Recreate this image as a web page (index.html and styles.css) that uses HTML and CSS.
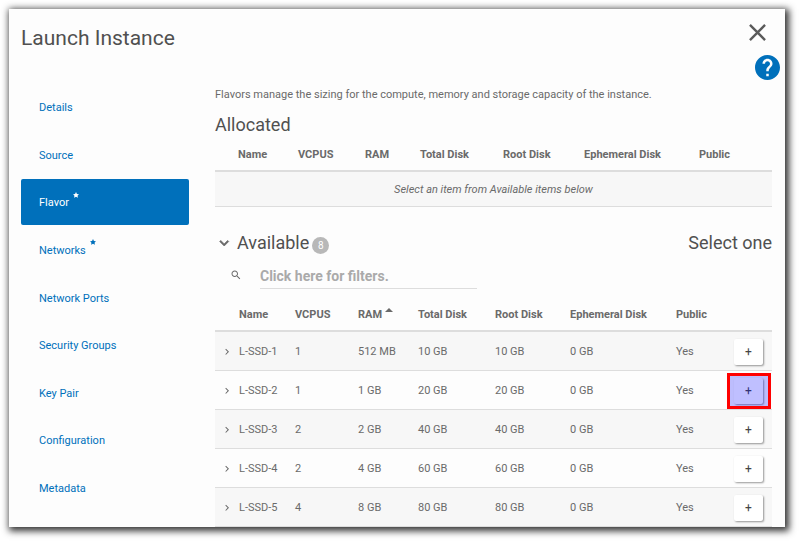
FILE: index.html
```
<!DOCTYPE html>
<html lang="en">
<head>
    <meta charset="UTF-8">
    <title>Launch Instance</title>
    <link rel="stylesheet" href="styles.css">
</head>
<body>
    <!-- shared icons -->
    <svg class="sprite" aria-hidden="true">
        <symbol id="star" viewBox="0 0 24 24">
            <path d="M12 0l3.700 7.600 8.100.9-5.700 6 1.700 8.500L12 19l-7.800 4 1.700-8.500-5.700-6 8.100-.9z"/>
        </symbol>
        <symbol id="chevron" viewBox="0 0 24 24">
            <path d="M8.600 16.300l4.600-4.600-4.600-4.600L10 5.700l6 6-6 6z"/>
        </symbol>
    </svg>

    <div class="modal">
        <header class="modal-header">
            <h1>Launch Instance</h1>
            <button type="button" class="close" aria-label="Close">
                <svg viewBox="0 0 18 18"><path d="M1 1l16 16M17 1L1 17"/></svg>
            </button>
        </header>
        <button type="button" class="help" aria-label="Help">
            <svg viewBox="2 2 20 20"><path d="M12 2C6.480 2 2 6.480 2 12s4.480 10 10 10 10-4.480 10-10S17.520 2 12 2zm1 17h-2v-2h2v2zm2.070-7.750l-.9.920C13.450 12.900 13 13.500 13 15h-2v-.5c0-1.100.45-2.100 1.170-2.830l1.240-1.260c.37-.36.59-.86.59-1.410 0-1.100-.9-2-2-2s-2 .9-2 2H8c0-2.210 1.790-4 4-4s4 1.790 4 4c0 .88-.36 1.680-.93 2.250z"/></svg>
        </button>

        <div class="modal-body">
            <nav class="steps">
                <a href="#">Details</a>
                <a href="#">Source</a>
                <a href="#" class="active">Flavor<svg class="star"><use href="#star"/></svg></a>
                <a href="#">Networks<svg class="star"><use href="#star"/></svg></a>
                <a href="#">Network Ports</a>
                <a href="#">Security Groups</a>
                <a href="#">Key Pair</a>
                <a href="#">Configuration</a>
                <a href="#">Metadata</a>
            </nav>

            <main class="content">
                <p>Flavors manage the sizing for the compute, memory and storage capacity of the instance.</p>

                <h2>Allocated</h2>
                <table class="allocated">
                    <thead>
                        <tr>
                            <th class="expand"></th>
                            <th class="name">Name</th>
                            <th class="vcpus">VCPUS</th>
                            <th class="ram">RAM</th>
                            <th class="total">Total Disk</th>
                            <th class="root">Root Disk</th>
                            <th class="ephemeral">Ephemeral Disk</th>
                            <th>Public</th>
                        </tr>
                    </thead>
                    <tbody>
                        <tr>
                            <td colspan="8" class="empty">Select an item from Available items below</td>
                        </tr>
                    </tbody>
                </table>

                <div class="available-title">
                    <svg class="chevron down"><use href="#chevron"/></svg>
                    <h2>Available</h2>
                    <span class="badge">8</span>
                    <h2 class="hint">Select one</h2>
                </div>

                <div class="filter">
                    <label for="filter" aria-label="Filter">
                        <svg viewBox="0 0 24 24"><path d="M15.500 14h-.79l-.28-.27C15.410 12.590 16 11.110 16 9.500 16 5.910 13.090 3 9.500 3S3 5.910 3 9.500 5.910 16 9.500 16c1.610 0 3.090-.59 4.230-1.570l.27.28v.79l5 4.990L20.490 19l-4.990-5zm-6 0C7.010 14 5 11.990 5 9.500S7.010 5 9.500 5 14 7.010 14 9.500 11.990 14 9.500 14z"/></svg>
                    </label>
                    <input type="text" id="filter" placeholder="Click here for filters.">
                </div>

                <table class="available">
                    <thead>
                        <tr>
                            <th class="expand"></th>
                            <th class="name">Name</th>
                            <th class="vcpus">VCPUS</th>
                            <th class="ram">RAM <svg class="sort" viewBox="0 0 8 4"><path d="M0 4l4-4 4 4z"/></svg></th>
                            <th class="total">Total Disk</th>
                            <th class="root">Root Disk</th>
                            <th class="ephemeral">Ephemeral Disk</th>
                            <th>Public</th>
                            <th class="action"></th>
                        </tr>
                    </thead>
                    <tbody>
                        <tr>
                            <td><svg class="chevron"><use href="#chevron"/></svg></td>
                            <td>L-SSD-1</td>
                            <td>1</td>
                            <td>512 MB</td>
                            <td>10 GB</td>
                            <td>10 GB</td>
                            <td>0 GB</td>
                            <td>Yes</td>
                            <td><button type="button" class="add">+</button></td>
                        </tr>
                        <tr>
                            <td><svg class="chevron"><use href="#chevron"/></svg></td>
                            <td>L-SSD-2</td>
                            <td>1</td>
                            <td>1 GB</td>
                            <td>20 GB</td>
                            <td>20 GB</td>
                            <td>0 GB</td>
                            <td>Yes</td>
                            <td class="marked"><button type="button" class="add">+</button></td>
                        </tr>
                        <tr>
                            <td><svg class="chevron"><use href="#chevron"/></svg></td>
                            <td>L-SSD-3</td>
                            <td>2</td>
                            <td>2 GB</td>
                            <td>40 GB</td>
                            <td>40 GB</td>
                            <td>0 GB</td>
                            <td>Yes</td>
                            <td><button type="button" class="add">+</button></td>
                        </tr>
                        <tr>
                            <td><svg class="chevron"><use href="#chevron"/></svg></td>
                            <td>L-SSD-4</td>
                            <td>2</td>
                            <td>4 GB</td>
                            <td>60 GB</td>
                            <td>60 GB</td>
                            <td>0 GB</td>
                            <td>Yes</td>
                            <td><button type="button" class="add">+</button></td>
                        </tr>
                        <tr>
                            <td><svg class="chevron"><use href="#chevron"/></svg></td>
                            <td>L-SSD-5</td>
                            <td>4</td>
                            <td>8 GB</td>
                            <td>80 GB</td>
                            <td>80 GB</td>
                            <td>0 GB</td>
                            <td>Yes</td>
                            <td><button type="button" class="add">+</button></td>
                        </tr>
                    </tbody>
                </table>
            </main>
        </div>
    </div>
</body>
</html>
```
FILE: styles.css
```
* {
    box-sizing: border-box;
}
body {
    margin: 0;
    padding: 9px 15px 14px 9px;
    background-color: #fff;
    color: #6a6a6a;
    font-family: Roboto, sans-serif;
    font-size: 11px;
    line-height: 21px;
}
h1, h2, p {
    margin: 0;
    font-weight: normal;
}
button {
    padding: 0;
    border: none;
    background: none;
    font-family: inherit;
    cursor: pointer;
}
svg {
    display: block;
    fill: currentColor;
}
.sprite {
    position: absolute;
    width: 0;
    height: 0;
}
.modal {
    position: relative;
    background-color: #fdfdfd;
    box-shadow: 2px 2px 7px 2px rgba(0, 0, 0, 0.8);
}
.modal-header {
    display: flex;
    justify-content: space-between;
    align-items: flex-start;
    padding: 15px 19px 16px 12px;
    color: #505050;
}
.modal-header h1 {
    font-size: 21px;
    line-height: 28px;
}
.close {
    color: #5a5a5a;
}
.close svg {
    width: 17px;
    height: 17px;
    fill: none;
    stroke: currentColor;
    stroke-width: 2.500;
}
.help {
    position: absolute;
    top: 46px;
    right: 5px;
    color: #0070bb;
}
.help svg {
    width: 25px;
    height: 25px;
}
.modal-body {
    display: flex;
    gap: 26px;
    padding: 16px 13px 0 12px;
}

/* steps */
.steps {
    display: flex;
    flex-direction: column;
    justify-content: space-between;
    flex: 0 0 168px;
    padding-bottom: 16px;
}
.steps a {
    display: flex;
    align-items: center;
    gap: 4px;
    height: 46px;
    padding: 1px 0 0 18px;
    border-radius: 2px;
    color: #0070bb;
    text-decoration: none;
}
.steps a.active {
    background-color: #0070bb;
    color: #fff;
}
.star {
    width: 6px;
    height: 6px;
    margin-bottom: 16px;
}

/* content */
.content {
    flex: 1;
    min-width: 0;
}
h2 {
    color: #505050;
    font-size: 18px;
    line-height: 26px;
}
.content p {
    margin-bottom: 7px;
}
table {
    width: 100%;
    table-layout: fixed;
    border-collapse: separate;
    border-spacing: 0;
}
th, td {
    padding: 1px 0 0;
    text-align: left;
    white-space: nowrap;
}
th {
    height: 34px;
    border-bottom: 2px solid #ddd;
    font-weight: bold;
}
td {
    height: 39px;
    border-bottom: 1px solid #ddd;
}
tbody tr:nth-child(odd) {
    background-color: #f7f7f7;
}
.allocated .expand { width: 23px; }
.allocated .name { width: 60px; }
.allocated .vcpus { width: 67px; }
.allocated .ram { width: 55px; }
.allocated .total { width: 83px; }
.allocated .root { width: 81px; }
.allocated .ephemeral { width: 115px; }
.available .expand { width: 24px; }
.available .name { width: 56px; }
.available .vcpus { width: 63px; }
.available .ram { width: 60px; }
.available .total { width: 77px; }
.available .root { width: 75px; }
.available .ephemeral { width: 106px; }
.available .action { width: 44px; }
.available th {
    height: 35px;
}
.allocated .empty {
    height: 35px;
    text-align: center;
    font-style: italic;
}
.available-title {
    display: flex;
    align-items: center;
    margin-top: 23px;
}
.chevron {
    width: 12px;
    height: 12px;
    margin-left: 6px;
}
.chevron.down {
    width: 18px;
    height: 18px;
    margin: 0 4px 0 0;
    stroke: currentColor;
    transform: rotate(90deg);
}
.badge {
    width: 17px;
    margin: 5px 0 0 3px;
    border-radius: 50%;
    background-color: #b8b8b8;
    color: #fff;
    font-size: 10px;
    line-height: 17px;
    text-align: center;
}
.hint {
    margin-left: auto;
}
.filter {
    display: flex;
    align-items: center;
    margin: 8px 0;
}
.filter label {
    width: 45px;
    padding: 0 0 3px 15px;
}
.filter svg {
    width: 12px;
    height: 12px;
}
.filter input {
    width: 217px;
    height: 25px;
    padding: 0;
    border: none;
    border-bottom: 1px solid #ddd;
    background: none;
    font-family: inherit;
    font-size: 14px;
    font-weight: bold;
}
.filter input::placeholder {
    color: #aaa;
}
.sort {
    display: inline-block;
    width: 8px;
    height: 4px;
    vertical-align: 6px;
}
.add {
    display: block;
    width: 29px;
    height: 26px;
    margin-left: 6px;
    border-radius: 2px;
    background-color: #fff;
    box-shadow: 1px 1px 2px rgba(0, 0, 0, 0.4);
    color: #444;
    font-size: 12px;
}
.marked {
    position: relative;
}
/* marker over the button */
.marked::after {
    content: "";
    position: absolute;
    top: 2px;
    right: 1px;
    bottom: 0;
    left: -1px;
    border: 3px solid #f00;
    background-color: rgba(0, 0, 255, 0.25);
    pointer-events: none;
}
```
